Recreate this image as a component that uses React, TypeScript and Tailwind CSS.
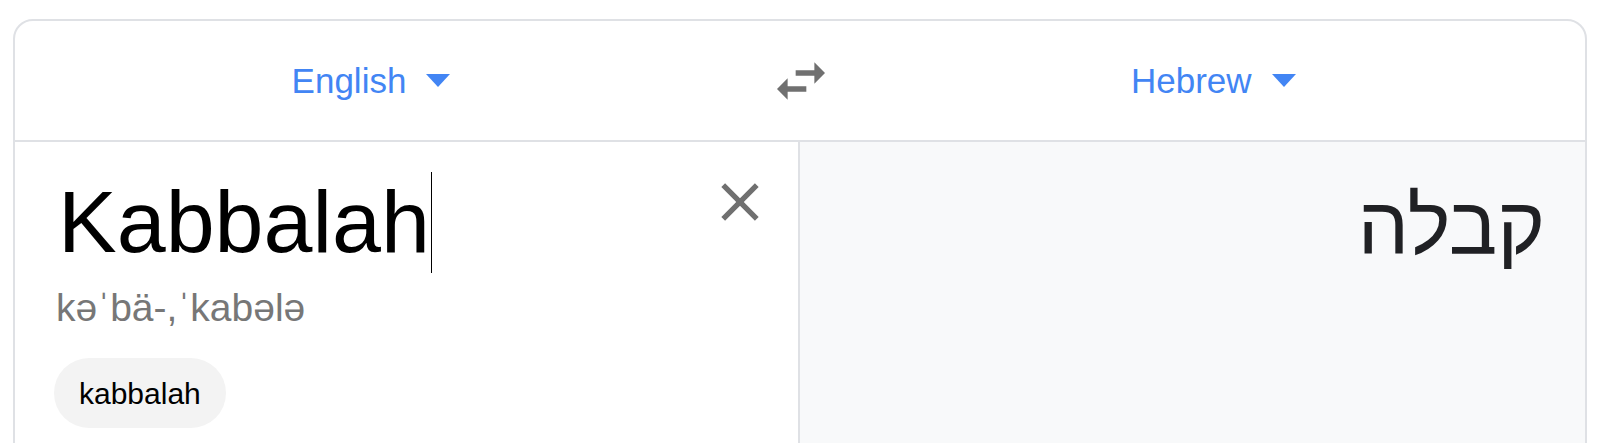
import React from "react";

function Caret() {
  return (
    <svg width="24" height="13" viewBox="0 0 24 13" aria-hidden="true" className="shrink-0">
      <path d="M0 0h24L12 13z" fill="#4285f4" />
    </svg>
  );
}

function LanguageButton({ label }: { label: string }) {
  return (
    <button className="flex items-center gap-[20px] text-[35px] leading-[40px] text-[#4285f4]">
      <span>{label}</span>
      <Caret />
    </button>
  );
}

export default function App() {
  return (
    <div className="min-h-[443px] overflow-hidden bg-white px-[13px] pt-[19px] font-['Liberation_Sans',Arial,sans-serif]">
      <div className="overflow-hidden rounded-[20px] border-2 border-[#dfe1e5] bg-white">
        {/* language bar */}
        <div className="flex h-[121px] items-center border-b-2 border-[#dfe1e5]">
          <div className="flex w-[712px] justify-center">
            <LanguageButton label="English" />
          </div>
          <div className="flex w-[148px] justify-center">
            <svg width="64" height="64" viewBox="0 0 24 24" aria-hidden="true">
              <path
                d="M6.99 11L3 15l3.99 4v-3H14v-2H6.99v-3zM21 9l-3.99-4v3H10v2h7.01v3L21 9z"
                fill="#707070"
              />
            </svg>
          </div>
          <div className="flex flex-1 pl-[256px]">
            <LanguageButton label="Hebrew" />
          </div>
        </div>

        {/* panels */}
        <div className="flex h-[320px]">
          <div className="flex w-[785px] border-r-2 border-[#dfe1e5]">
            <div className="flex-1 pl-[41px] pt-[30px]">
              <div className="ml-[2px] flex items-start text-[88px] leading-[100px] text-black">
                <span>Kabbalah</span>
                <span className="ml-px inline-block h-[101px] w-px bg-black" />
              </div>
              <p className="mt-[11px] text-[39px] leading-[48px] text-[#777777]">kəˈbä-,ˈkabələ</p>
              <button className="-ml-[2px] mt-[26px] flex h-[70px] items-center rounded-full bg-[#f3f3f3] px-[25px] text-[30px] text-black">
                kabbalah
              </button>
            </div>
            <button className="mr-[26px] mt-[28px] self-start" aria-label="Clear">
              <svg width="64" height="64" viewBox="0 0 24 24" aria-hidden="true">
                <path
                  d="M19 6.41L17.59 5 12 10.59 6.41 5 5 6.41 10.59 12 5 17.59 6.41 19 12 13.41 17.59 19 19 17.59 13.41 12z"
                  fill="#707070"
                />
              </svg>
            </button>
          </div>
          <div className="flex-1 bg-[#f8f9fa] pr-[40px] pt-[34px]">
            <p dir="rtl" lang="he" className="text-right text-[81px] leading-[100px] text-[#202124]">
              קבלה
            </p>
          </div>
        </div>
      </div>
    </div>
  );
}
